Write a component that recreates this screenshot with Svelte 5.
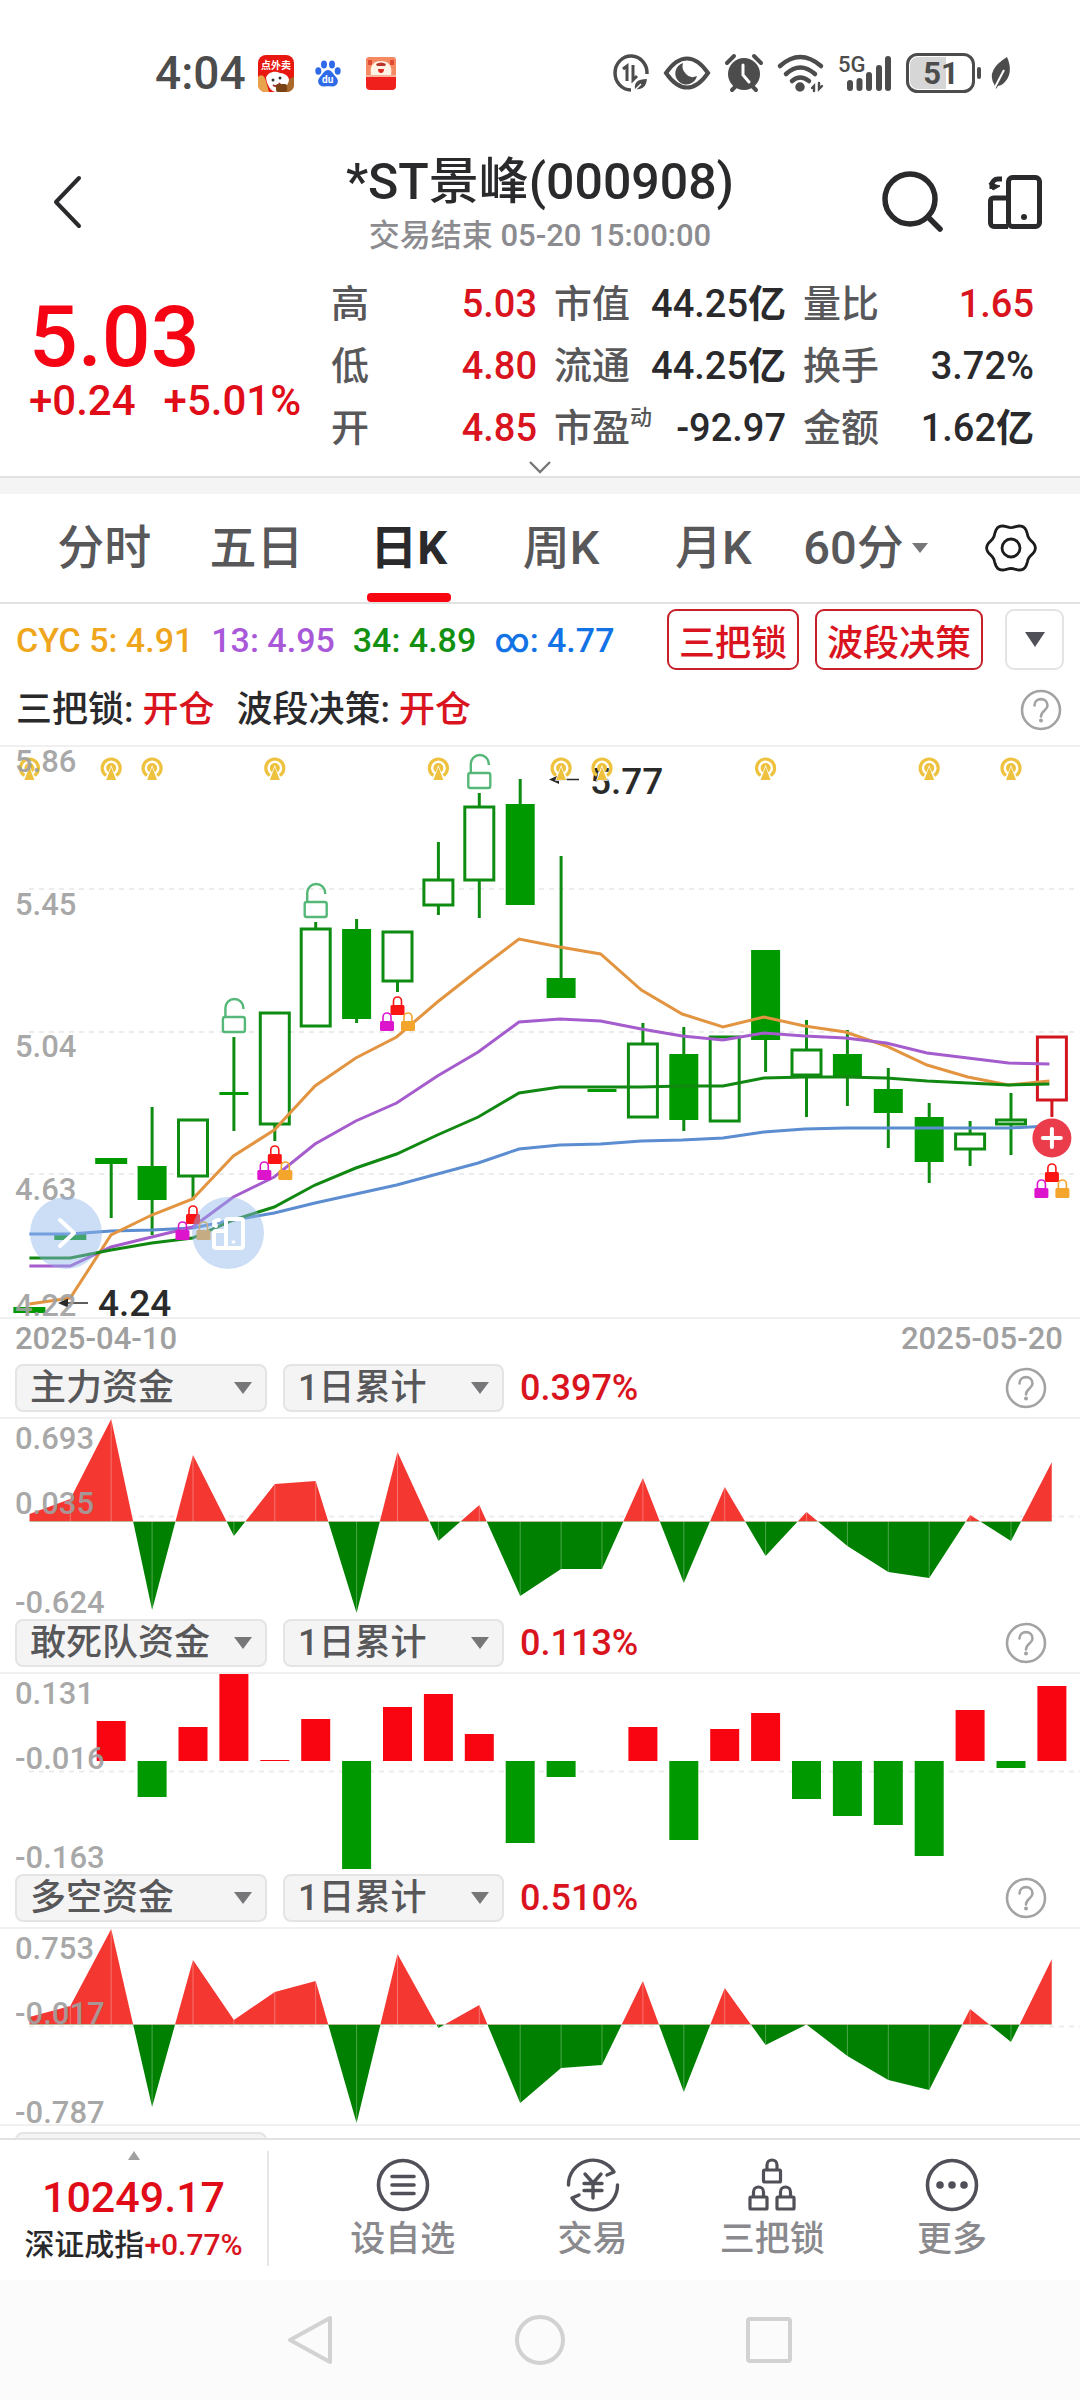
<script>
  const step = 40.9;
  const cx = (i) => 29.4 + step * i;
  const lx = (i) => 29.4 + 40.8 * i;

  const quotes = [
    [
      { k: '高', v: '5.03', up: true },
      { k: '低', v: '4.80', up: true },
      { k: '开', v: '4.85', up: true }
    ],
    [
      { k: '市值', v: '44.25', unit: '亿' },
      { k: '流通', v: '44.25', unit: '亿' },
      { k: '市盈', sup: '动', v: '-92.97' }
    ],
    [
      { k: '量比', v: '1.65', up: true },
      { k: '换手', v: '3.72%' },
      { k: '金额', v: '1.62', unit: '亿' }
    ]
  ];

  const tabs = ['分时', '五日', '日K', '周K', '月K', '60分'];
  let active = $state(2);

  // kind: f = filled, h = hollow, r = rising (red, hollow); then body top/bottom and wick top/bottom
  const candles = [
    ['f', 560, 566, 560, 566, 1], ['f', 487, 493, 487, 493, 1], ['f', 411, 417, 411, 471, 1],
    ['f', 419, 453, 360, 488], ['h', 372, 430, 372, 453], ['f', 345, 348, 290, 384],
    ['h', 265, 378, 265, 394], ['h', 181, 280, 175, 280], ['f', 182, 272, 172, 276],
    ['h', 184, 235, 184, 245], ['h', 132, 159, 95, 168], ['h', 59, 134, 46, 171],
    ['f', 57, 158, 32, 158], ['f', 231, 251, 109, 251], ['f', 342, 345, 342, 345],
    ['h', 296, 371, 276, 371], ['f', 307, 373, 280, 384], ['h', 289, 375, 289, 375],
    ['f', 203, 293, 203, 325], ['h', 302, 329, 273, 370], ['f', 307, 330, 283, 359],
    ['f', 342, 366, 321, 401], ['f', 370, 415, 356, 436], ['h', 386, 403, 374, 419],
    ['h', 372, 378, 346, 408], ['r', 289, 354, 289, 370]
  ];

  const averages = [
    { c: '#5b8dd0', y: [487, 487, 484, 483, 481, 473, 466, 456, 447, 438, 427, 416, 402, 398, 397, 394, 393, 391, 385, 382, 381, 381, 381, 381, 381, 379] },
    { c: '#e39440', y: [557, 551, 488, 468, 452, 409, 383, 339, 311, 290, 255, 223, 192, 200, 207, 243, 267, 280, 270, 279, 285, 299, 318, 330, 338, 334] },
    { c: '#a55ccc', y: [519, 519, 500, 490, 480, 450, 430, 397, 374, 356, 329, 305, 275, 272, 274, 282, 289, 293, 286, 289, 291, 296, 306, 311, 316, 317] },
    { c: '#118811', y: [511, 511, 503, 496, 491, 473, 460, 438, 421, 407, 388, 370, 346, 340, 340, 340, 339, 339, 331, 330, 330, 331, 334, 336, 338, 337] }
  ];

  const coins = [0, 2, 3, 6, 10, 13, 14, 18, 22, 24];
  const openLocks = [[5, 252], [7, 137], [11, 8]];
  const lockTrios = [[4, 458], [6, 398], [9, 249], [25, 416]];
  const grid = [142, 285, 427];
  const prices = [['5.86', 25], ['5.45', 168], ['5.04', 310], ['4.63', 453], ['4.22', 569]];

  const panels = [
    {
      name: '主力资金', pct: '0.397%', type: 'area', zero: 102.5, marks: ['0.693', '0.035', '-0.624'],
      y: [95, 80, 0, 191, 36, 117, 65, 62, 194, 33, 122, 86, 177, 150, 150, 59, 164, 68, 137, 93, 127, 153, 159, 96, 122, 43]
    },
    {
      name: '敢死队资金', pct: '0.113%', type: 'bar', zero: 87, marks: ['0.131', '-0.016', '-0.163'],
      y: [87, 87, 47, 123, 53, 0, 86, 45, 195, 33, 20, 60, 169, 103, 87, 53, 166, 55, 39, 125, 142, 151, 182, 36, 94, 12]
    },
    {
      name: '多空资金', pct: '0.510%', type: 'area', zero: 95.5, marks: ['0.753', '-0.017', '-0.787'],
      y: [88, 77, 0, 178, 31, 91, 63, 52, 194, 25, 99, 76, 174, 139, 136, 52, 163, 59, 116, 95.5, 127, 151, 161, 80, 113, 30]
    }
  ];

  // Outline from the zero line through each value, clipped per sign when drawn.
  const area = (p) =>
    `M${cx(0)} ${p.zero} ` + p.y.map((y, i) => `L${cx(i)} ${y}`).join(' ') + ` L${cx(25)} ${p.zero} Z`;

  const gear = 'M' + Array.from({ length: 72 }, (_, n) => {
    const a = (n * Math.PI) / 36;
    const r = 22.4 + 2 * Math.cos(6 * a);
    return `${(27 + r * Math.cos(a)).toFixed(1)} ${(27 + r * Math.sin(a)).toFixed(1)}`;
  }).join('L') + 'Z';
</script>

{#snippet help()}
  <button class="help" aria-label="帮助">
    <svg width="42" height="42" viewBox="0 0 42 42" fill="none" stroke="#a3a3a3" stroke-width="2.6">
      <circle cx="21" cy="21" r="19" />
      <path d="M14.500 16.500c0-8.500 13-8.500 13 0 0 5-6.500 5-6.500 11" stroke-linecap="round" />
      <circle cx="21" cy="31.500" r="1.200" fill="#a3a3a3" stroke-width="1.600" />
    </svg>
  </button>
{/snippet}

{#snippet closedLock(x, y, c)}
  <g transform="translate({x} {y})">
    <path d="M-4 10V5a4 4 0 0 1 8 0V10" fill="none" stroke={c} stroke-width="1.600" />
    <rect x="-7" y="9" width="14" height="10" rx="1.500" fill={c} />
  </g>
{/snippet}

<div class="screen">
  <div class="status">
    <div class="left">
      <span class="time">4:04</span>
      <svg class="a1" width="36" height="37" viewBox="0 0 36 37">
        <rect width="36" height="37" rx="8" fill="#e8170f" />
        <path d="M0 22c5-5 8 2 9 8l2 7H7a7 7 0 0 1-7-7z" fill="#e9a34b" />
        <path d="M36 22c-5 1-9 6-10 15h3a7 7 0 0 0 7-7z" fill="#a8692a" />
        <path d="M8 23c1-5 8-8 14-5 4 0 9 3 9 7-1 6-6 11-12 12-7 0-10-8-11-14z" fill="#fff" />
        <circle cx="15" cy="25" r="1.500" fill="#333" /><circle cx="22" cy="23" r="1.500" fill="#333" />
        <path d="M15 30q4 3 7-2" stroke="#a33" fill="none" stroke-width="2" />
        <rect x="18" y="29" width="11" height="8" rx="2" fill="#7a4315" />
        <text x="3" y="14" font-size="10" font-weight="700" fill="#fff">点外卖</text>
      </svg>
      <svg class="a2" width="26" height="27" viewBox="0 0 26 27">
        <g fill="#2f6be8">
          <ellipse cx="3.300" cy="11" rx="3" ry="3.700" /><ellipse cx="9" cy="4.500" rx="3" ry="4" />
          <ellipse cx="17" cy="4.500" rx="3" ry="4" /><ellipse cx="22.700" cy="11" rx="3" ry="3.700" />
          <path d="M13 10c4 0 5 4 8 7 4 4 1 10-4 9.500-3-.4-5-.4-8 0C4 27 1 21 5 17c3-3 4-7 8-7z" />
        </g>
        <text x="7" y="23" font-size="10" font-weight="700" fill="#fff">du</text>
      </svg>
      <svg class="a3" width="30" height="33" viewBox="0 0 30 33">
        <rect width="30" height="33" rx="4" fill="#f0201c" />
        <path d="M0 4a4 4 0 0 1 4-4h22a4 4 0 0 1 4 4v14H0z" fill="#f58a62" />
        <rect x="2" y="3" width="4" height="5" fill="#e34a34" /><rect x="24" y="3" width="4" height="5" fill="#e34a34" />
        <path d="M5 18C3 7 9 4 15 4s12 3 10 14z" fill="#fff3e6" />
        <path d="M10 7q5-3 10 0l-1 2h-8z" fill="#b8342a" />
        <path d="M12 12h6q0 4-3 4t-3-4z" fill="#e0281f" />
        <rect y="18" width="30" height="2" fill="#f7b49a" />
      </svg>
    </div>
    <div class="right">
      <svg width="36" height="38" viewBox="0 0 36 38" fill="none" stroke="#4c4c4c" stroke-width="3.500">
        <path d="M34 20A16 17 0 1 0 18 36" />
        <path d="M10 15l4-3v15M20 11v15l4-4" stroke-width="3" />
        <path d="M34 25c-10 0-13 4-12 10 7 1 11-2 12-10z" fill="#4c4c4c" stroke="none" />
        <path d="M20 38l8-8" stroke="#fff" stroke-width="1.500" />
      </svg>
      <svg width="48" height="34" viewBox="0 0 48 34">
        <path d="M3 17Q13 2.500 24 2.500T45 17Q35 31.500 24 31.500T3 17z" fill="none" stroke="#4c4c4c" stroke-width="4" />
        <path d="M20 7a11 11 0 1 0 14 13q-7 3-11-2-5-5-3-11z" fill="#4c4c4c" />
      </svg>
      <svg width="38" height="38" viewBox="0 0 38 38">
        <circle cx="19" cy="20" r="16" fill="#4c4c4c" />
        <path d="M2 9l7-7M36 9l-7-7M7 36l4-4M31 36l-4-4" stroke="#4c4c4c" stroke-width="4" stroke-linecap="round" />
        <path d="M18 11v10l6 7" fill="none" stroke="#fff" stroke-width="3" stroke-linecap="round" />
      </svg>
      <svg width="47" height="38" viewBox="0 0 47 38" fill="none" stroke="#4c4c4c" stroke-width="4.500" stroke-linecap="round">
        <path d="M3 12Q23-6 44 12M9 20Q23 7 38 20M15 27Q23 20 32 27" />
        <circle cx="23" cy="33" r="2.500" fill="#4c4c4c" />
        <path d="M35 34l2-2v5M42 29v6l3-3" stroke-width="2.400" />
      </svg>
      <svg width="54" height="38" viewBox="0 0 54 38" stroke="#4c4c4c" stroke-width="6" stroke-linecap="round">
        <text x="0" y="18" font-size="22" font-weight="500" fill="#4c4c4c" stroke="none">5G</text>
        <path d="M12 29v5M21.500 27v7M31 21v13M41 14v20M50 5v29" />
      </svg>
      <svg width="76" height="40" viewBox="0 0 76 40">
        <path d="M12 4h28v32H12a8 8 0 0 1-8-8V12a8 8 0 0 1 8-8z" fill="#d6d6d6" />
        <rect x="1.500" y="1.500" width="66" height="37" rx="10" fill="none" stroke="#4c4c4c" stroke-width="3" />
        <path d="M73 16v8" stroke="#4c4c4c" stroke-width="4" stroke-linecap="round" />
        <text x="35" y="31" text-anchor="middle" font-size="31" font-weight="700" fill="#4c4c4c">51</text>
      </svg>
      <svg class="leaf" width="20" height="34" viewBox="0 0 20 34">
        <path d="M17 1q7 16-3 26-3 3-6 3L6 33l-2-5q-8-14 13-27z" fill="#4c4c4c" />
        <path d="M4 33L14 14" stroke="#fff" stroke-width="2" />
      </svg>
    </div>
  </div>

  <header>
    <button class="icon" aria-label="返回">
      <svg width="30" height="54" viewBox="0 0 30 54" fill="none" stroke="#2a2a2c" stroke-width="4" stroke-linecap="round" stroke-linejoin="round">
        <path d="M27 3L4 27l23 24" />
      </svg>
    </button>
    <div class="heading">
      <h1>*ST景峰(000908)</h1>
      <p>交易结束 05-20 15:00:00</p>
    </div>
    <div class="tools">
      <button class="icon" aria-label="搜索">
        <svg width="62" height="62" viewBox="0 0 62 62" fill="none" stroke="#2a2a2c" stroke-width="5.500" stroke-linecap="round">
          <circle cx="28" cy="28" r="25" /><path d="M46 46l12 12" />
        </svg>
      </button>
      <button class="icon" aria-label="横屏">
        <svg width="54" height="56" viewBox="0 0 54 56" fill="none" stroke="#2a2a2c" stroke-width="5" stroke-linejoin="round">
          <rect x="20.500" y="3.500" width="31" height="49" rx="4" />
          <path d="M20 24H5.500a3 3 0 0 0-3 3v22a3.500 3.500 0 0 0 3.500 3.500H20" />
          <path d="M4 15V11a6 6 0 0 1 6-6h4" /><path d="M1 9l4 7 7-4z" fill="#2a2a2c" stroke-width="1" />
          <circle cx="36" cy="43" r="3" fill="#2a2a2c" stroke="none" />
        </svg>
      </button>
    </div>
  </header>

  <section class="quote">
    <div class="price">
      <strong>5.03</strong>
      <div class="change"><span>+0.24</span><span>+5.01%</span></div>
    </div>
    <div class="stats">
      {#each quotes as col}
        <dl>
          {#each col as q}
            <div>
              <dt>{q.k}{#if q.sup}<sup>{q.sup}</sup>{/if}</dt>
              <dd class:up={q.up}>{q.v}{#if q.unit}<b>{q.unit}</b>{/if}</dd>
            </div>
          {/each}
        </dl>
      {/each}
    </div>
    <button class="expand" aria-label="展开">
      <svg width="22" height="13" viewBox="0 0 22 13" fill="none" stroke="#77777a" stroke-width="2.400"><path d="M1 1l10 10L21 1" /></svg>
    </button>
  </section>

  <nav class="tabs">
    {#each tabs as t, i}
      <button class="tab" class:on={active === i} onclick={() => (active = i)}>
        {t}{#if i === 5}<i></i>{/if}
      </button>
    {/each}
    <button class="icon gear" aria-label="设置">
      <svg width="54" height="54" viewBox="0 0 54 54" fill="none" stroke="#1c1c1c" stroke-width="2.800" stroke-linejoin="round">
        <path d={gear} /><circle cx="27" cy="27" r="9" />
      </svg>
    </button>
  </nav>

  <section class="indicator">
    <div class="cyc">
      <span class="c5">CYC 5: 4.91</span><span class="c13">13: 4.95</span><span class="c34">34: 4.89</span><span class="cinf">∞: 4.77</span>
    </div>
    <div class="chips">
      <button class="chip">三把锁</button>
      <button class="chip">波段决策</button>
      <button class="more" aria-label="更多指标"><i></i></button>
    </div>
  </section>
  <section class="signals">
    <span>三把锁: <em>开仓</em></span>
    <span>波段决策: <em>开仓</em></span>
    {@render help()}
  </section>

  <section class="kline">
    <svg viewBox="0 0 1080 570">
      {#each grid as y}
        <path d="M29 {y}H1078" stroke="#ececec" stroke-width="2" stroke-dasharray="5 5" />
      {/each}
      {#each candles as [kind, top, bottom, high, low, wide], i}
        {@const c = kind === 'r' ? '#d2151f' : '#0e8c12'}
        {#if high < top}<path d="M{cx(i)} {high}V{top}" stroke={c} stroke-width="3" />{/if}
        {#if low > bottom}<path d="M{cx(i)} {bottom}V{low}" stroke={c} stroke-width="3" />{/if}
        {#if kind === 'f'}
          <rect x={cx(i) - (wide ? 16 : 14.5)} y={top} width={wide ? 32 : 29} height={bottom - top} fill="#009900" />
        {:else}
          <rect x={cx(i) - 14.5} y={top + 1} width="29" height={bottom - top - 2} fill="#fff" stroke={c} stroke-width="3" />
        {/if}
      {/each}
      {#each averages as a}
        <polyline points={a.y.map((y, i) => `${lx(i)},${y}`).join(' ')} fill="none" stroke={a.c} stroke-width="3" />
      {/each}
      {#each openLocks as [i, y]}
        <g transform="translate({cx(i)} {y})" fill="none" stroke="#56b878" stroke-width="2.400">
          <rect x="-11" y="18" width="22" height="15" rx="2" />
          <path d="M-8.500 18V9a9 9 0 0 1 18 0v1" />
        </g>
      {/each}
      {#each lockTrios as [i, y]}
        {@render closedLock(cx(i), y, '#fb1414')}
        {@render closedLock(cx(i) - 10.5, y + 16, '#dc14cc')}
        {@render closedLock(cx(i) + 10.5, y + 16, '#f3a52c')}
      {/each}
      <g fill="#2a2a2a" stroke="#2a2a2a">
        <path d="M558 32.500H579M67 556H88" stroke-width="1.500" fill="none" />
        <path d="M549 32.500l10-4.500v9zM58 556l10-4.500v9z" stroke="none" />
      </g>
      <text class="mark" x="590" y="47">5.77</text>
      <text class="mark" x="98" y="569">4.24</text>
      {#each coins as i}
        <g transform="translate({cx(i)} 21)">
          <path d="M-5 7.500A9 9 0 1 1 5 7.500" fill="none" stroke="#eec23e" stroke-width="3.200" />
          <circle r="5" fill="#eec23e" />
          <path d="M0-1L5 12H-5z" fill="#eec23e" stroke="#fff" stroke-width="1.400" paint-order="stroke" />
        </g>
      {/each}
      <g transform="translate({cx(25)} 391)">
        <circle r="19.500" fill="#eb3c4b" /><path d="M-9 0H9M0-9V9" stroke="#fff" stroke-width="4" stroke-linecap="round" />
      </g>
      {#each prices as [p, y]}
        <text class="axis" x="15" y={y}>{p}</text>
      {/each}
      <g class="bubble">
        <circle cx="66" cy="486" r="36" /><circle cx="228" cy="486" r="36" />
        <g fill="none" stroke="#fff" stroke-width="4" stroke-linecap="round" stroke-linejoin="round">
          <path d="M60 473l14 13-14 13" />
          <rect x="226" y="472" width="17" height="29" rx="2" />
          <path d="M225 484h-9a2 2 0 0 0-2 2v13a2 2 0 0 0 2 2h10M214 478q0-5 5-5M214 475l2 4" />
          <path d="M233 495h1" stroke-width="3" />
        </g>
      </g>
    </svg>
  </section>
  <div class="dates"><time>2025-04-10</time><time>2025-05-20</time></div>

  {#each panels as p, n}
    <section class="panel">
      <div class="bar">
        <label class="pick name"><select aria-label="指标"><option>{p.name}</option></select><i></i></label>
        <label class="pick"><select aria-label="周期"><option>1日累计</option></select><i></i></label>
        <output>{p.pct}</output>
        {@render help()}
      </div>
      <div class="plot">
        <svg viewBox="0 0 1080 195">
          <path d="M29 97.500H1080" stroke="#ececec" stroke-width="2" stroke-dasharray="5 5" />
          {#if p.type === 'bar'}
            {#each p.y as y, i}
              {#if y !== p.zero}
                <rect x={cx(i) - 14.5} y={Math.min(y, p.zero)} width="29" height={Math.abs(y - p.zero)} fill={y < p.zero ? '#f90512' : '#009900'} />
              {/if}
            {/each}
          {:else}
            <clipPath id="over{n}"><rect width="1080" height={p.zero} /></clipPath>
            <clipPath id="under{n}"><rect y={p.zero} width="1080" height={195 - p.zero} /></clipPath>
            <path d={area(p)} fill="#f43731" clip-path="url(#over{n})" />
            <path d={area(p)} fill="#008000" clip-path="url(#under{n})" />
            {#each p.y as y, i}
              <path d="M{cx(i)} {p.zero}V{y}" stroke="#fff" stroke-opacity=".3" />
            {/each}
          {/if}
          {#each p.marks as m, k}
            <text class="axis" x="15" y={[30, 95, 194][k]}>{m}</text>
          {/each}
        </svg>
      </div>
    </section>
  {/each}
  <div class="peek"><div></div></div>

  <footer>
    <button class="index">
      <i></i>
      <strong>10249.17</strong>
      <span>深证成指<em>+0.77%</em></span>
    </button>
    <div class="actions">
      <button>
        <svg width="54" height="54" viewBox="0 0 54 54" fill="none" stroke="#505058" stroke-width="3.600" stroke-linecap="round">
          <circle cx="27" cy="27" r="24.500" /><path d="M16 18.500h22M16 27h22M16 35.500h22" />
        </svg>
        设自选
      </button>
      <button>
        <svg width="54" height="54" viewBox="0 0 54 54" fill="none" stroke="#505058" stroke-width="3.400" stroke-linecap="round" stroke-linejoin="round">
          <path d="M2.500 27A24.500 24.500 0 0 1 48 14l-7 3M51.500 27A24.500 24.500 0 0 1 6 40l7-3" />
          <path d="M19 16l8 9 8-9M27 25v15M18 25.500h18M18 32.500h18" />
        </svg>
        交易
      </button>
      <button>
        <svg width="54" height="54" viewBox="0 0 54 54" fill="none" stroke="#505058" stroke-width="3.200" stroke-linejoin="round">
          {#each [[27, 0], [13.5, 27], [40.5, 27]] as [x, y]}
            <rect x={x - 8.5} y={y + 12} width="17" height="12" rx="1" />
            <path d="M{x - 5} {y + 12}V{y + 7}a5 5 0 0 1 10 0V{y + 12}" />
          {/each}
        </svg>
        三把锁
      </button>
      <button>
        <svg width="54" height="54" viewBox="0 0 54 54" fill="none" stroke="#505058" stroke-width="3.600">
          <circle cx="27" cy="27" r="24.500" />
          <g fill="#505058" stroke="none"><circle cx="15" cy="27" r="3.800" /><circle cx="27" cy="27" r="3.800" /><circle cx="39" cy="27" r="3.800" /></g>
        </svg>
        更多
      </button>
    </div>
  </footer>

  <nav class="system">
    <button class="icon" aria-label="后退">
      <svg width="54" height="54" viewBox="0 0 54 54"><path d="M46 5v44L6 27z" /></svg>
    </button>
    <button class="icon" aria-label="主页">
      <svg width="54" height="54" viewBox="0 0 54 54"><circle cx="27" cy="27" r="23" /></svg>
    </button>
    <button class="icon" aria-label="最近任务">
      <svg width="54" height="54" viewBox="0 0 54 54"><rect x="6" y="6" width="42" height="42" rx="2" /></svg>
    </button>
  </nav>
</div>

<style>
  :global(body) { margin: 0; background: #fff; }
  .screen {
    font-family: Roboto, "Noto Sans CJK SC", sans-serif;
    font-weight: 500;
    color: #2a2a2c;
    display: flex;
    flex-direction: column;
    min-height: 100vh;
  }
  button, select { font: inherit; color: inherit; background: none; border: 0; padding: 0; margin: 0; }
  svg { display: block; overflow: visible; }
  .icon { display: grid; place-items: center; }
  h1, p, dl, dd, dt { margin: 0; }
  em { font-style: normal; }

  .status { height: 146px; display: flex; align-items: center; justify-content: space-between; padding: 0 70px 0 155px; }
  .status .left { display: flex; align-items: center; }
  .time { font-size: 46px; font-weight: 500; line-height: 46px; color: #4c4c4c; margin-right: 12px; }
  .a1 { margin-right: 21px; }
  .a2 { margin-right: 25px; }
  .status .right { display: flex; align-items: center; gap: 14px; }
  .status .leaf { margin-left: -6px; }

  header { height: 112px; display: grid; grid-template-columns: 190px 1fr 190px; align-items: center; }
  header > .icon { justify-self: start; margin-left: 52px; }
  .heading { text-align: center; display: flex; flex-direction: column; gap: 4px; white-space: nowrap; align-items: center; padding-top: 3px; }
  h1 { font-size: 50px; line-height: 60px; font-weight: 500; }
  .heading p { font-size: 31px; line-height: 40px; color: #8c8c90; }
  .tools { display: flex; gap: 44px; justify-content: flex-end; padding-right: 38px; }

  .quote { display: grid; grid-template-columns: 331px 1fr; padding-top: 15px; border-bottom: 2px solid #e2e2e2; }
  .price { color: #f50514; padding: 23px 0 0 29px; }
  .price strong { display: block; font-size: 86px; line-height: 82px; font-weight: 500; }
  .change { display: flex; gap: 28px; font-size: 42px; line-height: 46px; color: #e00c18; }
  .stats { display: grid; grid-template-columns: 206fr 232fr 231fr; gap: 17px; padding-right: 46px; }
  dl > div { display: flex; justify-content: space-between; font-size: 38px; line-height: 62px; white-space: nowrap; }
  dt { color: #58585a; }
  dd.up { color: #d9141e; }
  sup { font-size: 22px; line-height: 0; vertical-align: 16px; }
  .expand { grid-column: 1 / -1; height: 17px; display: grid; place-items: center; }

  .tabs { display: grid; grid-template-columns: repeat(6, 152fr) 138fr; padding-left: 28px; height: 108px; border-top: 16px solid #f4f4f4; border-bottom: 2px solid #e2e2e2; }
  .tab { position: relative; font-size: 47px; line-height: 108px; color: #58585a; white-space: nowrap; display: flex; justify-content: center; align-items: center; gap: 8px; }
  .tab i { border: 8px solid transparent; border-top: 10px solid #77777a; border-bottom: 0; }
  .tab.on { color: #2a2a2c; font-weight: 700; }
  .tab.on::after { content: ""; position: absolute; left: 50%; bottom: 0; width: 84px; height: 9px; margin-left: -42px; border-radius: 4px; background: #f90512; }

  .indicator { display: flex; align-items: center; justify-content: space-between; height: 71px; padding: 0 16px; }
  .cyc { display: flex; gap: 18px; font-size: 34px; white-space: nowrap; }
  .c5 { color: #efa61c; }
  .c13 { color: #a858d8; }
  .c34 { color: #129012; }
  .cinf { color: #1173e6; }
  .chips { display: flex; gap: 16px; }
  .chip { height: 61px; padding: 0 10px; border: 2px solid #c8202a; border-radius: 9px; color: #d9141e; font-size: 36px; font-weight: 500; }
  .more { width: 59px; height: 61px; margin-left: 6px; border: 2px solid #e4e4e4; border-radius: 9px; display: grid; place-items: center; }
  .more i { border: 10px solid transparent; border-top: 15px solid #505058; border-bottom: 0; }
  .signals { display: flex; align-items: center; gap: 22px; height: 70px; padding: 0 18px 0 16px; font-size: 36px; line-height: 40px; border-bottom: 2px solid #f0f0f0; }
  .signals em { color: #d9141e; }
  .help { margin-left: auto; display: grid; place-items: center; }

  .kline { border-bottom: 2px solid #f0f0f0; }
  .kline svg, .plot svg { width: 100%; height: auto; }
  .axis { font-size: 31px; fill: #a0a0a0; fill-opacity: .92; }
  .mark { font-size: 37px; fill: #2a2a2a; }
  .bubble > circle { fill: #8fb4ec; fill-opacity: .46; }
  .dates { display: flex; justify-content: space-between; padding: 0 17px 0 15px; font-size: 31px; line-height: 40px; color: #a0a0a0; }

  .bar { display: flex; align-items: center; height: 58px; padding: 0 33px 0 15px; }
  .pick { display: grid; grid-template-columns: 221px; align-items: center; margin-right: 16px; }
  .pick.name { grid-template-columns: 252px; }
  .pick > * { grid-area: 1 / 1; }
  .pick select { appearance: none; height: 48px; border: 2px solid #e4e4e4; border-radius: 8px; background: #f4f4f4; padding: 0 13px; font-size: 36px; line-height: 44px; color: #58585a; }
  .pick i { justify-self: end; margin-right: 15px; border: 9px solid transparent; border-top: 12px solid #77777a; border-bottom: 0; pointer-events: none; }
  output { font-size: 36px; color: #d9141e; font-weight: 500; }
  .plot { border-top: 2px solid #f0f0f0; }
  .peek { height: 14px; border-top: 2px solid #f0f0f0; overflow: hidden; padding: 6px 0 0 15px; box-sizing: border-box; }
  .peek div { width: 252px; height: 48px; box-sizing: border-box; border: 2px solid #e4e4e4; border-radius: 8px; background: #f4f4f4; }

  footer { display: flex; height: 140px; border-top: 2px solid #e2e2e2; }
  .index { width: 269px; display: flex; flex-direction: column; align-items: center; margin: 11px 0 14px; border-right: 2px solid #e6e6e6; white-space: nowrap; }
  .index i { border: 6px solid transparent; border-bottom: 9px solid #a0a0a0; border-top: 0; }
  .index strong { font-size: 43px; line-height: 52px; margin-top: 11px; font-weight: 500; color: #e00c18; }
  .index span { font-size: 30px; line-height: 44px; }
  .index em { color: #d9141e; }
  .actions { flex: 1; display: grid; grid-template-columns: 190fr 190fr 170fr 190fr; padding: 0 33px 0 39px; }
  .actions button { display: flex; flex-direction: column; align-items: center; padding-top: 18px; gap: 8px; font-size: 35px; line-height: 40px; color: #8a8a8e; }

  .system { flex: 1; min-height: 120px; background: #fbfbfb; display: flex; justify-content: center; align-items: center; gap: 175px; }
  .system svg { fill: none; stroke: #d2d2d2; stroke-width: 4; stroke-linejoin: round; }
</style>
